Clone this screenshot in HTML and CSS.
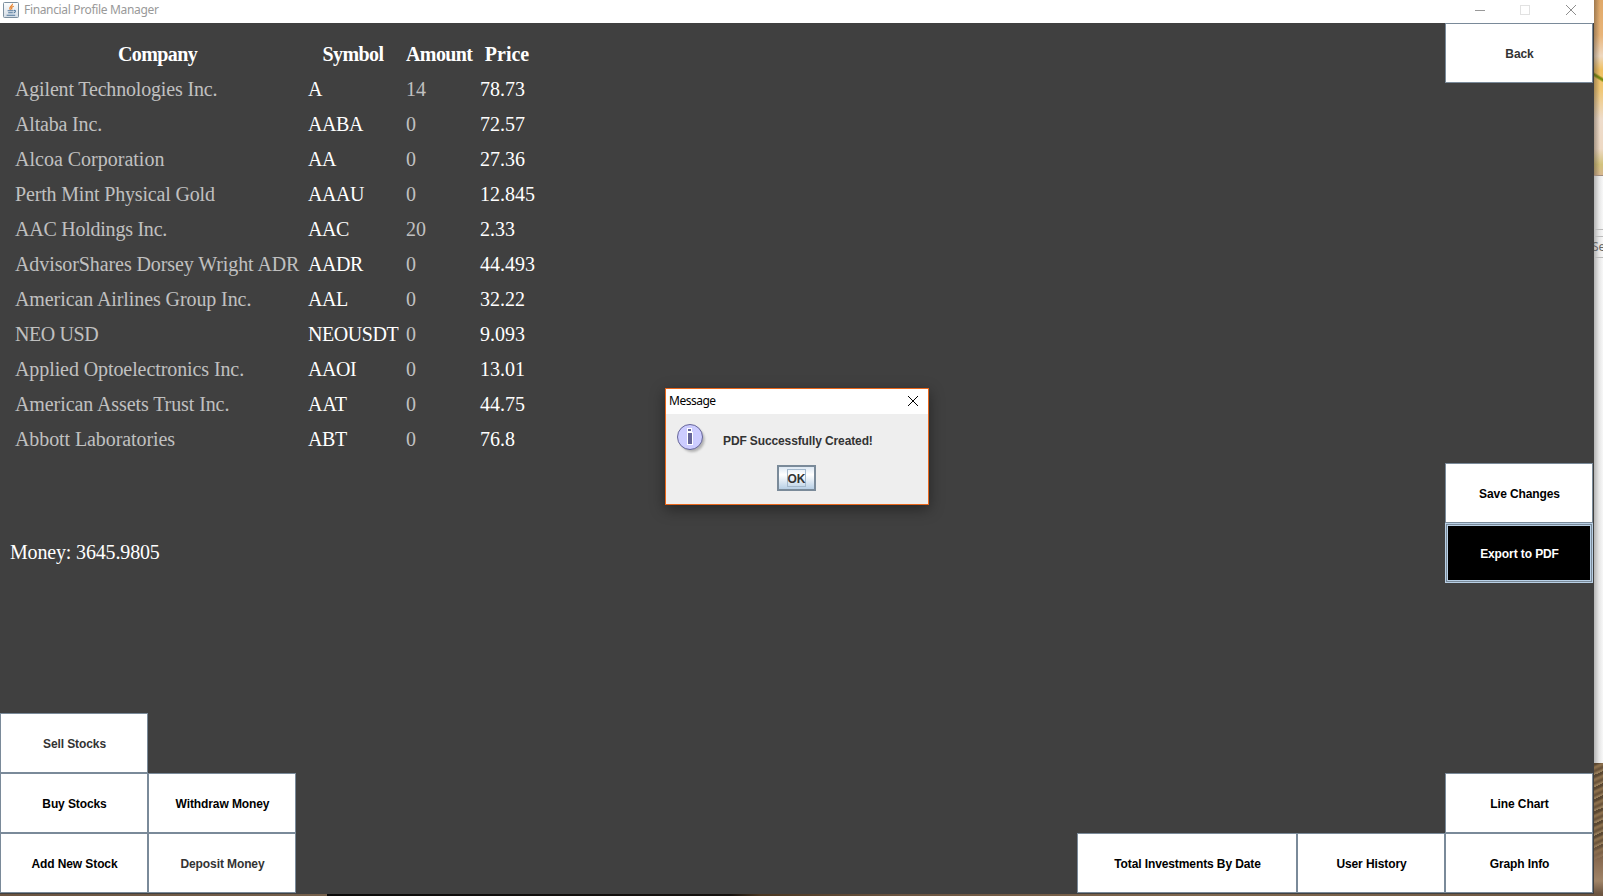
FILE: index.html
```
<!DOCTYPE html>
<html lang="en">
<head>
<meta charset="utf-8">
<title>Financial Profile Manager</title>
<link rel="stylesheet" href="styles.css">
</head>
<body>
<div class="desktop">
  <div class="row">
    <main class="window">
      <header class="titlebar">
        <svg class="java" viewBox="0 0 16 16" width="16" height="16">
          <defs><linearGradient id="jg" x1="0" y1="0" x2="0" y2="1"><stop offset="0" stop-color="#fdfefe"/><stop offset="1" stop-color="#d3dce6"/></linearGradient></defs>
          <rect x=".5" y=".5" width="15" height="15" rx="1" fill="url(#jg)" stroke="#7c8f9f"/>
          <path d="M9.4 1.8C10.2 4 5 4.6 7.4 8M10.8 4.2C8.4 5 8.2 6 9 7.6" fill="none" stroke="#e8822c" stroke-width="1.2"/>
          <path d="M4.6 8.8H10.6M5.2 10.8H9.8M3.6 13.2H12.2M11 8.4C13.4 8.2 12.4 10.6 10.6 11" fill="none" stroke="#52779b" stroke-width="1.1"/>
        </svg>
        <span class="title">Financial Profile Manager</span>
        <svg class="controls" viewBox="0 0 110 20" width="110" height="20" fill="none">
          <path d="M4 10.5H14" stroke="#999"/>
          <rect x="49.5" y="5.5" width="9" height="9" stroke="#e2e2e2"/>
          <path d="M95 5L105 15M105 5L95 15" stroke="#8e8e8e"/>
        </svg>
      </header>
      <div class="client">
        <section class="left">
          <div class="stocks">
            <b>Company</b><b>Symbol</b><b>Amount</b><b class="price">Price</b>
            <i class="t2">Agilent Technologies Inc.</i><em>A</em><i>14</i><span>78.73</span>
            <i class="t2">Altaba Inc.</i><em>AABA</em><i>0</i><span>72.57</span>
            <i>Alcoa Corporation</i><em>AA</em><i>0</i><span>27.36</span>
            <i class="t2">Perth Mint Physical Gold</i><em>AAAU</em><i>0</i><span>12.845</span>
            <i class="t3">AAC Holdings Inc.</i><em>AAC</em><i>20</i><span>2.33</span>
            <i class="t1">AdvisorShares Dorsey Wright ADR</i><em>AADR</em><i>0</i><span>44.493</span>
            <i class="t1">American Airlines Group Inc.</i><em>AAL</em><i>0</i><span>32.22</span>
            <i class="t4">NEO USD</i><em>NEOUSDT</em><i>0</i><span>9.093</span>
            <i class="t1">Applied Optoelectronics Inc.</i><em>AAOI</em><i>0</i><span>13.01</span>
            <i class="t1">American Assets Trust Inc.</i><em class="wider">AAT</em><i>0</i><span>44.75</span>
            <i class="t1">Abbott Laboratories</i><em>ABT</em><i>0</i><span>76.8</span>
          </div>
          <div class="money">Money: 3645.9805</div>
          <div class="pad">
            <button class="btn soft">Sell Stocks</button>
            <div class="line"><button class="btn">Buy Stocks</button><button class="btn">Withdraw Money</button></div>
            <div class="line"><button class="btn">Add New Stock</button><button class="btn soft">Deposit Money</button></div>
          </div>
        </section>
        <section class="right">
          <button class="btn soft">Back</button>
          <div class="mid">
            <button class="btn">Save Changes</button>
            <button class="btn active">Export to PDF</button>
          </div>
          <div class="pad end">
            <button class="btn">Line Chart</button>
            <div class="line"><button class="btn wide">Total Investments By Date</button><button class="btn">User History</button><button class="btn">Graph Info</button></div>
          </div>
        </section>
      </div>
    </main>
    <aside class="behind">
      <div class="leaf"></div>
      <div class="page"><div class="search">Se</div></div>
      <div class="ground"></div>
    </aside>
  </div>
  <div class="floor"></div>
</div>
<div class="dialog">
  <div class="dtitle"><span class="dname">Message</span>
    <svg viewBox="0 0 12 12" width="12" height="12"><path d="M1 1L11 11M11 1L1 11" stroke="#000" fill="none"/></svg>
  </div>
  <div class="dbody">
    <svg class="info" viewBox="0 0 32 32" width="32" height="32">
      <defs><filter id="bl" x="-20%" y="-20%" width="140%" height="140%"><feGaussianBlur stdDeviation="1.3"/></filter></defs>
      <circle cx="16.2" cy="16.5" r="12.4" fill="#999" opacity=".7" filter="url(#bl)"/>
      <circle cx="14" cy="14" r="12.5" fill="#ccccff" stroke="#666699"/>
      <path d="M11 5H16V9H17V22H11Z" fill="#fff"/>
      <path d="M12 6H15V8H12ZM12 10H16V21H12Z" fill="#666699"/>
    </svg>
    <div class="dmsg">PDF Successfully Created!</div>
    <button class="ok"><span class="focus">OK</span></button>
  </div>
</div>
</body>
</html>
```
FILE: styles.css
```
* { box-sizing: border-box; }
body { margin: 0; width: 1603px; height: 896px; overflow: hidden; position: relative; font-family: "Liberation Sans", Arial, sans-serif; }
.desktop { display: flex; flex-direction: column; height: 896px; }
.row { display: flex; height: 894px; }
.window { width: 1594px; display: flex; flex-direction: column; background: #404040; }
.titlebar { height: 23px; background: #fff; display: flex; align-items: flex-start; padding: 2px 21px 0 3px; }
.title { font: 12px/16px "Noto Sans", sans-serif; letter-spacing: -.34px; color: #999; margin-left: 5px; flex: 1; white-space: nowrap; }
.controls { margin-top: -2px; margin-right: -8px; }
.client { flex: 1; display: flex; justify-content: space-between; }
.left { display: flex; flex-direction: column; padding-top: 14px; }
.stocks { display: grid; grid-template-columns: 285px 90px 66px 54px; column-gap: 8px; grid-auto-rows: 35px; margin-left: 15px; font: 20px/35px "Liberation Serif", serif; color: #fff; white-space: nowrap; }
.stocks b { text-align: center; letter-spacing: -.6px; }
.stocks .price { letter-spacing: 0; }
.stocks i { font-style: normal; color: #c0c0c0; }
.stocks em { font-style: normal; letter-spacing: -.45px; }
.stocks .wider { letter-spacing: 0; }
.stocks .t1 { letter-spacing: -.09px; }
.stocks .t2 { letter-spacing: -.17px; }
.stocks .t3 { letter-spacing: -.24px; }
.stocks .t4 { letter-spacing: -.42px; }
.money { margin: 78px 0 0 10px; font: 20px/35px "Liberation Serif", serif; letter-spacing: -.16px; color: #fff; }
.pad { margin-top: auto; padding-bottom: 1px; display: flex; flex-direction: column; align-items: flex-start; }
.end { align-items: flex-end; }
.line { display: flex; }
.btn { width: 148px; height: 60px; flex: none; margin: 0; padding: 2px 0 0 1px; border: 1px solid #7a8a99; background: #fff; color: #000; font: bold 12px/16px "Liberation Sans", Arial, sans-serif; letter-spacing: -.1px; }
.soft { color: #333; }
.wide { width: 220px; }
.active { background: #000; color: #fff; border-color: #b8cfe5; box-shadow: inset 0 0 0 1px #7a8a99, inset 0 0 0 2px #b8cfe5; }
.right { display: flex; flex-direction: column; align-items: flex-end; padding-right: 1px; }
.mid { display: flex; flex-direction: column; margin-top: 380px; }
.behind { width: 9px; display: flex; flex-direction: column; overflow: hidden; }
.leaf { height: 175px; background: linear-gradient(90deg, rgba(60,50,40,.4), transparent 6px), linear-gradient(211deg, transparent 44%, #a8a030 47%, #6f850a 50%, #8c961c 53%, transparent 57%) 0 58px / 9px 38px no-repeat, linear-gradient(#e0a868, #e8b478 20%, #eed8c0 32%, #f0c060 40%, #f0c878 52%, #eedccb 68%, #eed9c4 85%, #d2c27c 94%, #d8b890); }
.page { height: 588px; border-top: 1px solid #a08c7c; padding-top: 53px; background: linear-gradient(90deg, #b4b4b4, #e6e6e6 5px, #f8f8f8); }
.search { height: 29px; border-top: 1px solid #bbb; border-bottom: 1px solid #bbb; font: 12px/33px "Noto Sans", sans-serif; color: #666; text-indent: -2px; background: linear-gradient(transparent 6px, #bbb 6px, #bbb 7px, transparent 7px); }
.ground { flex: 1; background: linear-gradient(transparent 60%, #8a6c52 75%, #a08468 90%, #6b5440), repeating-linear-gradient(155deg, #5a4731 0 2px, #8b6f4c 4px 5px, #6b543a 7px 8px, #957c5a 10px 11px); }
.floor { height: 2px; background: linear-gradient(90deg, #6b5440 0, #75604b 327px, #0b0a09 327px, #15110e 730px, #4a3722 760px, #6b5440 900px, #80684e 1200px, #6c5540 1603px); }
.dialog { position: absolute; left: 665px; top: 388px; width: 264px; height: 117px; border: 1px solid #e8661b; background: #eee; box-shadow: 0 4px 14px rgba(0,0,0,.42); }
.dtitle { height: 25px; background: #fff; display: flex; justify-content: space-between; padding: 6px 9px 0 3px; }
.dname { font: 12px/12px "Noto Sans", sans-serif; letter-spacing: -.5px; color: #000; }
.dbody { display: grid; grid-template-columns: 32px 1fr; column-gap: 15px; padding: 9px 10px 0; }
.dmsg { font: bold 12px/16px "Liberation Sans", Arial, sans-serif; letter-spacing: -.12px; color: #333; padding-top: 10px; white-space: nowrap; }
.ok { grid-column: 1 / 3; width: 39px; height: 26px; margin: 10px 0 0 101px; padding: 0; border: 2px solid #7a8a99; background: linear-gradient(#dde8f3, #fff 35%, #b8cfe5); display: flex; align-items: center; justify-content: center; }
.focus { width: 19px; height: 18px; border: 1px solid #a3b8cc; font: bold 12px/18px "Liberation Sans", Arial, sans-serif; color: #333; display: flex; justify-content: center; }
```
